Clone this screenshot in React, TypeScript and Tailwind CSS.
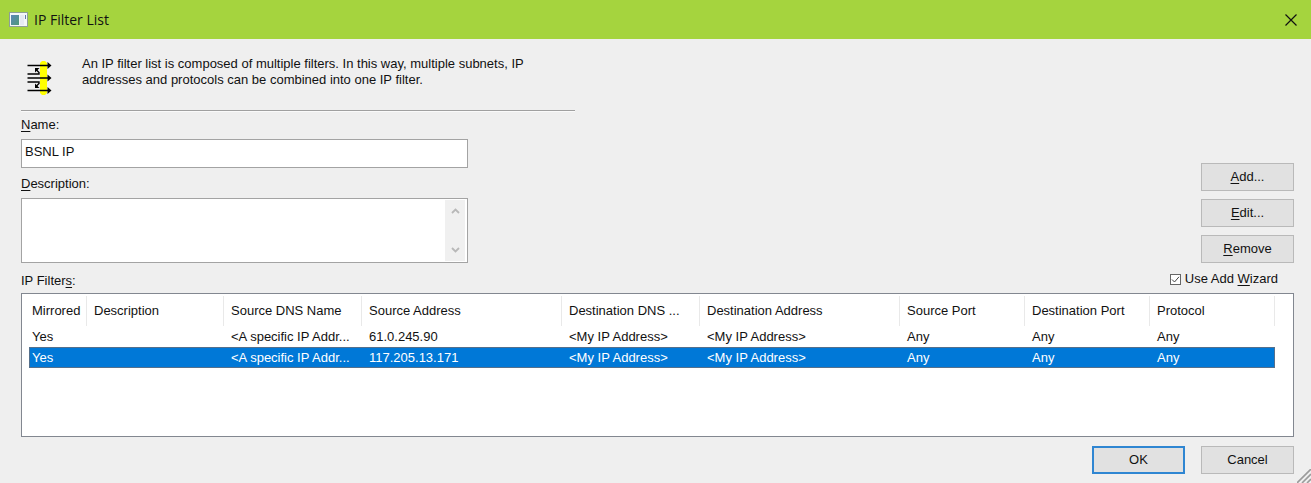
import { useState } from "react";

type Filter = {
  mirrored: string;
  description: string;
  sourceDns: string;
  sourceAddress: string;
  destDns: string;
  destAddress: string;
  sourcePort: string;
  destPort: string;
  protocol: string;
};

const filters: Filter[] = [
  {
    mirrored: "Yes",
    description: "",
    sourceDns: "<A specific IP Addr...",
    sourceAddress: "61.0.245.90",
    destDns: "<My IP Address>",
    destAddress: "<My IP Address>",
    sourcePort: "Any",
    destPort: "Any",
    protocol: "Any",
  },
  {
    mirrored: "Yes",
    description: "",
    sourceDns: "<A specific IP Addr...",
    sourceAddress: "117.205.13.171",
    destDns: "<My IP Address>",
    destAddress: "<My IP Address>",
    sourcePort: "Any",
    destPort: "Any",
    protocol: "Any",
  },
];

const columns: { key: keyof Filter; title: string; width: string }[] = [
  { key: "mirrored", title: "Mirrored", width: "w-[58px]" },
  { key: "description", title: "Description", width: "w-[137px]" },
  { key: "sourceDns", title: "Source DNS Name", width: "w-[138px]" },
  { key: "sourceAddress", title: "Source Address", width: "w-[200px]" },
  { key: "destDns", title: "Destination DNS ...", width: "w-[138px]" },
  { key: "destAddress", title: "Destination Address", width: "w-[200px]" },
  { key: "sourcePort", title: "Source Port", width: "w-[125px]" },
  { key: "destPort", title: "Destination Port", width: "w-[125px]" },
  { key: "protocol", title: "Protocol", width: "w-[125px]" },
];

function Key({ children }: { children: string }) {
  return <span className="underline decoration-1 underline-offset-2">{children}</span>;
}

function AppIcon() {
  return (
    <svg width="19" height="15" viewBox="0 0 19 15" aria-hidden="true">
      <defs>
        <linearGradient id="pane" x1="0" y1="0" x2="1" y2="1">
          <stop offset="0" stopColor="#5b86b8" />
          <stop offset="1" stopColor="#4f9a78" />
        </linearGradient>
      </defs>
      <rect x="0.5" y="0.5" width="18" height="14" fill="#f4f6f8" stroke="#8e9f96" />
      <rect x="2" y="3" width="8" height="10" fill="url(#pane)" />
      <rect x="11" y="3" width="4" height="10" fill="#e6eaf2" />
      <rect x="16" y="3" width="1" height="4" fill="#6079a8" />
    </svg>
  );
}

function FilterIcon() {
  return (
    <svg width="27" height="36" viewBox="0 0 27 36" aria-hidden="true">
      <path d="M16 1h3l2 2v30l-2 2h-3l-2-2V3z" fill="#ffff00" />
      <g stroke="#000" strokeWidth="1.5" fill="none">
        <path d="M1.500 5.500H22M1.500 18H22M1.500 30.500H22" />
        <path d="M1.500 14H13V12.500L10 9.500M1.500 22H13V23.500L10 26.500" strokeWidth="1.400" />
      </g>
      <path
        d="M21.500 2L25.500 5.500L21.500 9zM21.500 14.500L25.500 18L21.500 21.500zM21.500 27L25.500 30.500L21.500 34zM9 8h4.500L9 12.500zM9 28h4.500L9 23.500z"
        fill="#000"
      />
    </svg>
  );
}

function Chevron({ up = false }: { up?: boolean }) {
  return (
    <svg width="9" height="6" viewBox="0 0 9 6" aria-hidden="true">
      <path
        d={up ? "M1 5L4.500 1.500L8 5" : "M1 1L4.500 4.500L8 1"}
        fill="none"
        stroke="#b8b8b8"
        strokeWidth="1.800"
      />
    </svg>
  );
}

const button =
  "h-7 w-[93px] border border-[#b9b9b9] bg-[#e1e1e1] text-center leading-4 hover:bg-[#e5f1fb]";

export default function App() {
  const [name, setName] = useState("BSNL IP");
  const [description, setDescription] = useState("");
  const [wizard, setWizard] = useState(true);
  const [selected, setSelected] = useState(1);

  return (
    <div className="relative flex min-h-screen flex-col bg-[#efefef] font-['Liberation_Sans',Arial,sans-serif] text-[13px] leading-4 text-[#111]">
      <header className="flex h-[39px] items-center bg-[#a5d43e] pr-[10px] pl-[9px]">
        <AppIcon />
        <h1 className="ml-[6px] flex-1 font-['Open_Sans','Noto_Sans',sans-serif] text-[14px]">
          IP Filter List
        </h1>
        <button type="button" aria-label="Close" className="p-1">
          <svg width="12" height="12" viewBox="0 0 12 12" aria-hidden="true">
            <path d="M0.500 0.500L11.500 11.500M11.500 0.500L0.500 11.500" stroke="#111" strokeWidth="1.200" />
          </svg>
        </button>
      </header>

      <main className="flex flex-1 flex-col pr-[17px] pb-[9px] pl-[21px]">
        <div className="flex w-[554px] max-w-full items-start border-b border-[#a0a0a0] pt-[17px] pb-[22px] shadow-[0_1px_0_#fafafa]">
          <div className="h-8 w-[61px] shrink-0 pt-1 pl-[5px]">
            <FilterIcon />
          </div>
          <p>
            An IP filter list is composed of multiple filters. In this way, multiple subnets, IP
            <br />
            addresses and protocols can be combined into one IP filter.
          </p>
        </div>

        <div className="flex items-end justify-between gap-4 pt-[6px]">
          <div className="flex w-[447px] flex-col">
            <label htmlFor="name">
              <Key>N</Key>ame:
            </label>
            <input
              id="name"
              value={name}
              onChange={(e) => setName(e.target.value)}
              className="mt-[6px] h-[29px] border border-[#a3a3a3] bg-white pb-1 pl-[3px] outline-none"
            />
            <label htmlFor="description" className="mt-2">
              <Key>D</Key>escription:
            </label>
            <div className="mt-[6px] flex h-[65px] border border-[#a3a3a3] bg-white">
              <textarea
                id="description"
                value={description}
                onChange={(e) => setDescription(e.target.value)}
                className="flex-1 resize-none overflow-hidden px-[3px] py-1 outline-none"
              />
              <div className="my-px mr-[2px] flex w-5 flex-col items-center justify-between bg-[#f0f0f0] py-2">
                <button type="button" aria-label="Scroll up" className="flex">
                  <Chevron up />
                </button>
                <button type="button" aria-label="Scroll down" className="flex">
                  <Chevron />
                </button>
              </div>
            </div>
          </div>
          <div className="flex flex-col gap-2">
            <button type="button" className={button}>
              <Key>A</Key>dd...
            </button>
            <button type="button" className={button}>
              <Key>E</Key>dit...
            </button>
            <button type="button" className={button}>
              <Key>R</Key>emove
            </button>
          </div>
        </div>

        <div className="flex items-end justify-between pt-2">
          <span id="filters-label">
            IP Filter<Key>s</Key>:
          </span>
          <label className="mr-4 mb-[2px] flex items-center gap-1">
            <input
              type="checkbox"
              checked={wizard}
              onChange={(e) => setWizard(e.target.checked)}
              className="peer sr-only"
            />
            <span className="flex size-[11px] items-center justify-center border border-[#666] bg-white">
              {wizard && (
                <svg width="9" height="9" viewBox="0 0 9 9" aria-hidden="true">
                  <path d="M1 4.500L3.500 7L8 1.800" fill="none" stroke="#444" strokeWidth="1" />
                </svg>
              )}
            </span>
            <span>
              Use Add <Key>W</Key>izard
            </span>
          </label>
        </div>

        <div className="mt-1 flex-1 overflow-auto border border-[#828790] bg-white pt-[2px] pl-[7px]">
          <table
            aria-labelledby="filters-label"
            className="w-[1246px] table-fixed border-separate border-spacing-0 text-left"
          >
            <thead>
              <tr className="h-[30px]">
                {columns.map((c, i) => (
                  <th
                    key={c.key}
                    className={`${c.width} ${i === 0 ? "pl-[3px]" : "pl-[7px]"} truncate border-r border-[#e9e9e9] p-0 font-normal`}
                  >
                    {c.title}
                  </th>
                ))}
              </tr>
            </thead>
            <tbody>
              {filters.map((f, row) => (
                <tr
                  key={f.sourceAddress}
                  aria-selected={row === selected}
                  onClick={() => setSelected(row)}
                  className={`h-[21px] ${row === selected ? "bg-[#0078d7] text-white outline-1 -outline-offset-1 outline-[#55708c]" : ""}`}
                >
                  {columns.map((c, i) => (
                    <td key={c.key} className={`truncate p-0 ${i === 0 ? "pl-[3px]" : "pl-[7px]"}`}>
                      {f[c.key]}
                    </td>
                  ))}
                </tr>
              ))}
            </tbody>
          </table>
        </div>

        <div className="mt-[9px] flex justify-end gap-4">
          <button
            type="button"
            className="h-7 w-[93px] border-2 border-[#2f86d2] bg-[#e1e1e1] text-center leading-4"
          >
            OK
          </button>
          <button type="button" className={button}>
            Cancel
          </button>
        </div>
      </main>

      <svg
        width="14"
        height="14"
        viewBox="0 0 14 14"
        aria-hidden="true"
        className="absolute right-0 bottom-0"
      >
        <path d="M0 14L14 0M5 14L14 5M10 14L14 10" stroke="#9b9b9b" strokeWidth="1.600" />
      </svg>
    </div>
  );
}
